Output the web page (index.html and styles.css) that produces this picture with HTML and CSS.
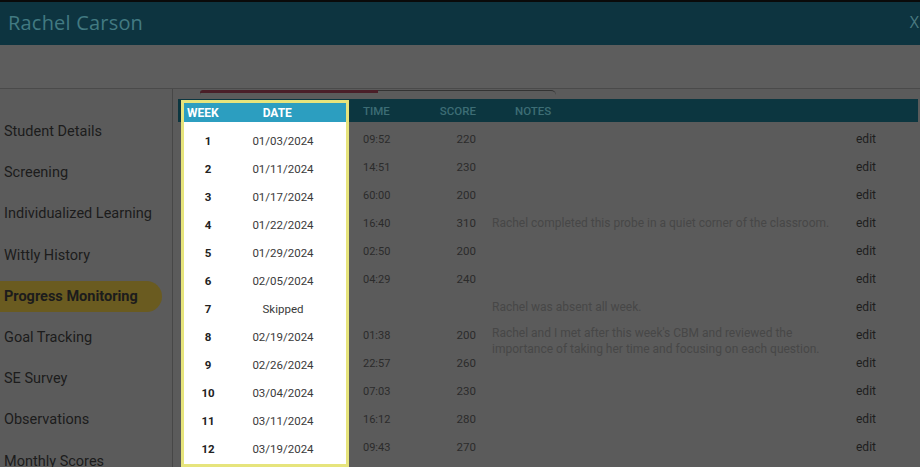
FILE: index.html
```html
<!DOCTYPE html>
<html lang="en">
<head>
    <meta charset="UTF-8">
    <meta name="viewport" content="width=device-width, initial-scale=1.0">
    <title>Rachel Carson</title>
    <link rel="stylesheet" href="styles.css">
</head>
<body>

<div class="topbar">
    <span class="title">Rachel Carson</span>
    <span class="close">X</span>
</div>
<div class="band"></div>

<div class="layout">
    <div class="sidebar">
        <div class="nav-item">Student Details</div>
        <div class="nav-item">Screening</div>
        <div class="nav-item">Individualized Learning</div>
        <div class="nav-item">Wittly History</div>
        <div class="nav-item active">Progress Monitoring</div>
        <div class="nav-item">Goal Tracking</div>
        <div class="nav-item">SE Survey</div>
        <div class="nav-item">Observations</div>
        <div class="nav-item">Monthly Scores</div>
    </div>

    <div class="main">
        <div class="tabs"><div class="tab-active"></div></div>

        <div class="table">
            <div class="spot">
                <div class="spot-head">
                    <span class="h-week">WEEK</span>
                    <span class="h-date">DATE</span>
                </div>
                <div class="spot-body">
                    <div class="spot-row"><span class="week">1</span><span class="date">01/03/2024</span></div>
                    <div class="spot-row"><span class="week">2</span><span class="date">01/11/2024</span></div>
                    <div class="spot-row"><span class="week">3</span><span class="date">01/17/2024</span></div>
                    <div class="spot-row"><span class="week">4</span><span class="date">01/22/2024</span></div>
                    <div class="spot-row"><span class="week">5</span><span class="date">01/29/2024</span></div>
                    <div class="spot-row"><span class="week">6</span><span class="date">02/05/2024</span></div>
                    <div class="spot-row"><span class="week">7</span><span class="date">Skipped</span></div>
                    <div class="spot-row"><span class="week">8</span><span class="date">02/19/2024</span></div>
                    <div class="spot-row"><span class="week">9</span><span class="date">02/26/2024</span></div>
                    <div class="spot-row"><span class="week">10</span><span class="date">03/04/2024</span></div>
                    <div class="spot-row"><span class="week">11</span><span class="date">03/11/2024</span></div>
                    <div class="spot-row"><span class="week">12</span><span class="date">03/19/2024</span></div>
                </div>
            </div>

            <div class="rest">
                <div class="row head">
                    <span class="time">TIME</span>
                    <span class="score">SCORE</span>
                    <span class="notes">NOTES</span>
                    <span class="edit"></span>
                </div>
                <div class="rows">
                    <div class="row"><span class="time">09:52</span><span class="score">220</span><span class="notes"></span><span class="edit">edit</span></div>
                    <div class="row"><span class="time">14:51</span><span class="score">230</span><span class="notes"></span><span class="edit">edit</span></div>
                    <div class="row"><span class="time">60:00</span><span class="score">200</span><span class="notes"></span><span class="edit">edit</span></div>
                    <div class="row"><span class="time">16:40</span><span class="score">310</span><span class="notes">Rachel completed this probe in a quiet corner of the classroom.</span><span class="edit">edit</span></div>
                    <div class="row"><span class="time">02:50</span><span class="score">200</span><span class="notes"></span><span class="edit">edit</span></div>
                    <div class="row"><span class="time">04:29</span><span class="score">240</span><span class="notes"></span><span class="edit">edit</span></div>
                    <div class="row"><span class="time"></span><span class="score"></span><span class="notes">Rachel was absent all week.</span><span class="edit">edit</span></div>
                    <div class="row"><span class="time">01:38</span><span class="score">200</span><span class="notes long">Rachel and I met after this week's CBM and reviewed the importance of taking her time and focusing on each question.</span><span class="edit">edit</span></div>
                    <div class="row"><span class="time">22:57</span><span class="score">260</span><span class="notes"></span><span class="edit">edit</span></div>
                    <div class="row"><span class="time">07:03</span><span class="score">230</span><span class="notes"></span><span class="edit">edit</span></div>
                    <div class="row"><span class="time">16:12</span><span class="score">280</span><span class="notes"></span><span class="edit">edit</span></div>
                    <div class="row"><span class="time">09:43</span><span class="score">270</span><span class="notes"></span><span class="edit">edit</span></div>
                </div>
            </div>
        </div>
    </div>
</div>

</body>
</html>
```

FILE: styles.css
```css
body {
    margin: 0;
    font-family: 'Roboto', 'Liberation Sans', sans-serif;
    background: #5b5b5b;
    height: 467px;
    overflow: hidden;
}
.topbar {
    height: 40px;
    border-top: 2px solid #0a0a0a;
    padding: 0 0 3px 8px;
    background: #0d3440;
    display: flex;
    align-items: center;
    justify-content: space-between;
}
.title {
    font-family: 'Open Sans', sans-serif;
    font-size: 20px;
    color: #427a82;
    letter-spacing: 0.2px;
}
.close {
    font-family: 'Open Sans', sans-serif;
    font-size: 16px;
    color: #4a7a80;
    margin-right: 1px;
}
.band {
    height: 43px;
    background: #5d5d5d;
    border-bottom: 1px solid #4a4a4a;
}
.layout {
    display: flex;
    background: #5b5b5b;
}
.sidebar {
    width: 172px;
    border-right: 1px solid #474747;
    padding-top: 27px;
    height: 351px;
}
.nav-item {
    height: 31px;
    line-height: 31px;
    margin-bottom: 10.2px;
    padding-left: 4px;
    font-size: 14.5px;
    color: #1c1c1c;
    white-space: nowrap;
}
.nav-item.active {
    width: 158px;
    background: #6a5b20;
    border-radius: 0 16px 16px 0;
    font-weight: bold;
}
.main {
    flex: 1;
    padding: 0 2px 0 5px;
}
.tabs {
    margin: 1px 0 4px 22px;
    width: 356px;
    height: 4px;
    border-top: 1px solid #333;
    border-radius: 8px 8px 0 0;
}
.tab-active {
    width: 178px;
    height: 3px;
    margin-top: -1px;
    background: #4a1e28;
    border-radius: 3px 0 0 0;
}
.table {
    display: flex;
    background: linear-gradient(#0c3640, #0c3640) top / 100% 23px no-repeat;
}
.spot {
    width: 162px;
    margin: 1px 0 0 3px;
    border: 3px solid #e6e47c;
    background: #fff;
    padding-bottom: 1px;
}
.spot-head {
    height: 19px;
    background: #2c9ec0;
    display: flex;
    align-items: center;
    color: #fff;
    font-size: 12px;
    font-weight: bold;
}
.h-week {
    padding-left: 3px;
}
.h-date {
    padding-left: 44px;
}
.spot-body {
    padding-top: 5px;
}
.spot-row {
    height: 28px;
    display: flex;
    align-items: center;
    font-size: 11.5px;
}
.week {
    width: 48px;
    text-align: center;
    font-weight: bold;
    color: #222;
}
.date {
    width: 102px;
    text-align: center;
    color: #3a3a3a;
}
.rest {
    flex: 1;
}
.rows {
    margin-top: 3px;
}
.row {
    height: 28px;
    display: grid;
    grid-template-columns: 76px 53px 378px 1fr;
    grid-template-rows: 28px;
    align-items: center;
    font-size: 11px;
}
.row.head {
    height: 23px;
    grid-template-rows: 23px;
    font-size: 11.5px;
    font-weight: 500;
}
.time {
    padding-left: 14px;
    color: #2b2b2b;
}
.score {
    text-align: right;
    padding-right: 2px;
    color: #2b2b2b;
    font-size: 11.5px;
}
.notes {
    padding-left: 14px;
    color: #474747;
    font-size: 12px;
}
.head .time,
.head .score,
.head .notes {
    color: #3d6d75;
    font-size: 11.5px;
}
.head .notes {
    padding-left: 37px;
}
.notes.long {
    align-self: start;
    padding-top: 4px;
    padding-right: 30px;
    line-height: 16px;
}
.edit {
    color: #1e1e1e;
    font-size: 12px;
}
```
